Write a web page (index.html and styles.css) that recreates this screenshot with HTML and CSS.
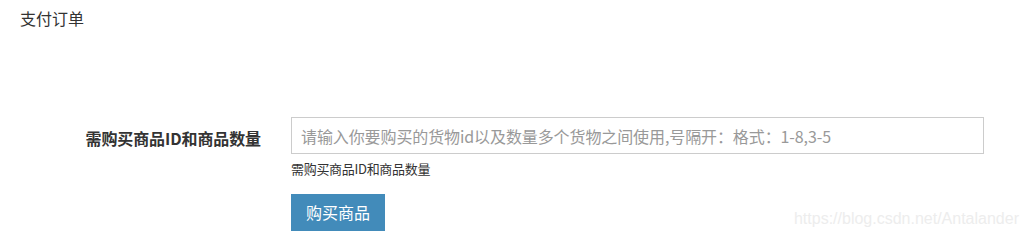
FILE: index.html
```html
<!DOCTYPE html>
<html lang="zh-CN">
<head>
<meta charset="utf-8">
<title>支付订单</title>
<link rel="stylesheet" href="styles.css">
</head>
<body>
<div class="page">
  <h1 class="title">支付订单</h1>
  <form class="order-form">
    <label class="field-label" for="goods">需购买商品ID和商品数量</label>
    <div class="field">
      <input class="field-input" id="goods" type="text" placeholder="请输入你要购买的货物id以及数量多个货物之间使用,号隔开：格式：1-8,3-5">
      <div class="field-help">需购买商品ID和商品数量</div>
      <button class="btn-buy" type="button">购买商品</button>
    </div>
  </form>
  <div class="watermark">https://blog.csdn.net/Antalander</div>
</div>
</body>
</html>
```

FILE: styles.css
```css
* { box-sizing: border-box; }
html, body { margin: 0; padding: 0; background: #fff; }
body {
  font-family: "Noto Sans CJK SC", "Noto Sans", sans-serif;
  color: #333;
  width: 1028px;
  height: 236px;
  overflow: hidden;
}
.page {
  position: relative;
  height: 236px;
  padding: 7px 20px 0 20px;
}
.title {
  margin: 0;
  font-size: 16px;
  font-weight: normal;
  line-height: 22px;
  color: #333;
}
.order-form {
  display: grid;
  grid-template-columns: 241px 693px;
  column-gap: 30px;
  margin-top: 88px;
}
.field-label {
  text-align: right;
  font-size: 16px;
  font-weight: bold;
  line-height: 36px;
  height: 36px;
  padding-top: 3px;
  color: #333;
  letter-spacing: -0.1px;
}
.field {
  display: flex;
  flex-direction: column;
  align-items: flex-start;
}
.field-input {
  width: 693px;
  height: 37px;
  border: 1px solid #ccc;
  padding: 0 9px;
  font-family: inherit;
  font-size: 16px;
  color: #555;
  outline: none;
  background: #fff;
  letter-spacing: -0.1px;
}
.field-input::placeholder { color: #999; }
.field-help {
  margin-top: 5px;
  font-size: 13px;
  line-height: 20px;
  color: #333;
  letter-spacing: -0.3px;
}
.btn-buy {
  margin-top: 15px;
  width: 94px;
  height: 37px;
  border: none;
  padding: 0;
  background: #428bba;
  color: #fff;
  font-family: inherit;
  font-size: 16px;
  line-height: 37px;
  cursor: pointer;
}
.watermark {
  position: absolute;
  right: 9px;
  bottom: 8px;
  font-family: "Liberation Sans", Arial, sans-serif;
  font-size: 16px;
  line-height: 18px;
  color: #ededed;
}
```
